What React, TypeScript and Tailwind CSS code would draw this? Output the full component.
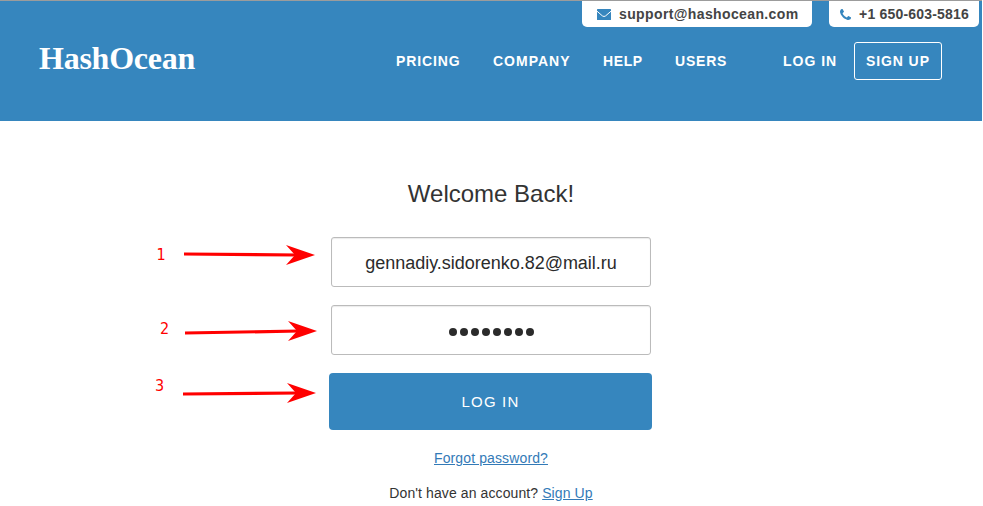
import React from "react";

interface NavItem {
  label: string;
  className: string;
}

interface Step {
  label: string;
  labelX: number;
  labelY: number;
  startX: number;
  startY: number;
  tipX: number;
  tipY: number;
}

const navItems: NavItem[] = [
  { label: "PRICING", className: "w-[97px] tracking-[0.9px]" },
  { label: "COMPANY", className: "w-[110px] tracking-[1px]" },
  { label: "HELP", className: "w-[72px] tracking-[0.6px]" },
  { label: "USERS", className: "w-[108px] tracking-[0.8px]" },
  { label: "LOG IN", className: "w-[71px] tracking-[1px]" },
];

const steps: Step[] = [
  { label: "1", labelX: 156.5, labelY: 260, startX: 184, startY: 254, tipX: 315, tipY: 255 },
  { label: "2", labelX: 160, labelY: 334, startX: 185, startY: 333, tipX: 317, tipY: 331 },
  { label: "3", labelX: 155, labelY: 391, startX: 183, startY: 394, tipX: 316, tipY: 393 },
];

const EnvelopeIcon: React.FC = () => (
  <svg className="mr-2 text-[#3686be]" width="14" height="11" viewBox="0 0 14 11">
    <rect width="14" height="11" rx="0.6" fill="currentColor" />
    <path d="M0 2.2L5.4 6.9Q7 8.1 8.6 6.9L14 2.2" fill="none" stroke="#fff" strokeWidth="1" />
  </svg>
);

const PhoneIcon: React.FC = () => (
  <svg
    className="mr-2 text-[#3686be]"
    width="11"
    height="11"
    viewBox="0 128 1408 1408"
    fill="currentColor"
  >
    <path d="M1408 1240q0 27-10 70.5t-21 68.5q-21 50-122 106-94 51-186 51-27 0-53-3.5t-57-12.5-47-14.5-55.5-20.5-49-18q-98-35-175-83-127-79-264-216t-216-264q-48-77-83-175-3-9-18-49t-20.5-55.5-14.5-47-12.5-57-3.5-53q0-92 51-186 56-101 106-122 25-11 68.5-21t70.5-10q14 0 21 3 18 6 53 76 11 19 30 54t35 63.5 31 53.5q3 4 17.5 25t21.5 35.5 7 28.5q0 20-28.5 50t-62 55-62 53-28.5 46q0 9 5 22.5t8.5 20.5 14 24 11.5 19q76 137 174 235t235 174q2 1 19 11.5t24 14 20.5 8.5 22.5 5q18 0 46-28.5t53-62 55-62 50-28.5q14 0 28.5 7t35.5 21.5 25 17.5q25 15 53.5 31t63.5 35 54 30q70 35 76 53 3 7 3 21z" />
  </svg>
);

const Header: React.FC = () => (
  <header className="w-[982px] h-[121px] bg-[#3686be] border-t border-[#9c9c9c]">
    {/* Contacts */}
    <div className="flex justify-end gap-[17px] h-[26px] pr-[3px] text-sm font-bold text-[#444] whitespace-nowrap">
      <div className="flex items-center w-[230px] pl-[15px] bg-white rounded-b-[5px]">
        <EnvelopeIcon />
        <span className="tracking-[0.38px]">support@hashocean.com</span>
      </div>
      <div className="flex items-center w-[150px] pl-[11px] bg-white rounded-b-[5px]">
        <PhoneIcon />
        <span className="tracking-[0.2px]">+1 650-603-5816</span>
      </div>
    </div>

    <div className="flex items-center h-[38px] mt-[15px] pl-[39px] text-white">
      <div className="w-[357px] pb-[6px] font-['Liberation_Serif',serif] text-[32px] leading-8 font-bold tracking-[-0.25px]">
        HashOcean
      </div>
      <nav className="flex items-center text-sm font-bold whitespace-nowrap">
        {navItems.map((item) => (
          <a key={item.label} href="#" className={item.className}>
            {item.label}
          </a>
        ))}
        <a
          href="#"
          className="flex items-center w-[88px] h-[38px] pl-[11px] border border-white rounded-[3px] tracking-[0.9px]"
        >
          SIGN UP
        </a>
      </nav>
    </div>
  </header>
);

// Numbered arrows pointing at the form fields
const Annotations: React.FC = () => (
  <svg
    className="absolute inset-0 pointer-events-none"
    width="983"
    height="506"
    fill="#f00"
  >
    {steps.map((s) => (
      <g key={s.label}>
        <text
          x={s.labelX}
          y={s.labelY}
          className="font-['DejaVu_Sans_Condensed','DejaVu_Sans',sans-serif] text-base"
        >
          {s.label}
        </text>
        <line
          x1={s.startX}
          y1={s.startY}
          x2={s.tipX - 18}
          y2={s.tipY}
          stroke="#f00"
          strokeWidth="3.2"
        />
        <path d={`M${s.tipX} ${s.tipY}l-29 -10l9 10l-9 10z`} />
      </g>
    ))}
  </svg>
);

const App: React.FC = () => {
  return (
    <div className="relative w-[983px] h-[506px] overflow-hidden bg-white font-['Liberation_Sans',Arial,sans-serif] text-[#333]">
      <Header />

      <main className="flex flex-col items-center w-[982px] pt-[57px]">
        <h1 className="text-2xl leading-8">Welcome Back!</h1>

        <div className="flex items-center justify-center w-[320px] h-[50px] mt-[27px] pt-[2px] border border-[#bbb] rounded-[3px] text-lg tracking-[-0.02px] text-[#2b2b2b] shadow-[inset_0_1px_1px_rgba(0,0,0,0.08)]">
          gennadiy.sidorenko.82@mail.ru
        </div>

        <div className="flex items-center justify-center gap-[3px] w-[320px] h-[50px] mt-[18px] pt-[3px] border border-[#bbb] rounded-[3px] shadow-[inset_0_1px_1px_rgba(0,0,0,0.08)]">
          {Array.from({ length: 8 }, (_, i) => (
            <span key={i} className="size-2 rounded-full bg-[#2b2b2b]" />
          ))}
        </div>

        <button className="w-[323px] h-[57px] mt-[18px] mr-[1px] pt-[1px] bg-[#3686be] rounded text-[15px] tracking-[1.2px] text-white">
          LOG IN
        </button>

        <a href="#" className="mt-[18px] text-sm tracking-[0.12px] text-[#337ab7] underline">
          Forgot password?
        </a>

        <p className="mt-[15px] text-sm tracking-[0.1px]">
          Don't have an account?{" "}
          <a href="#" className="text-[#337ab7] underline">
            Sign Up
          </a>
        </p>
      </main>

      <Annotations />
    </div>
  );
};

export default App;
